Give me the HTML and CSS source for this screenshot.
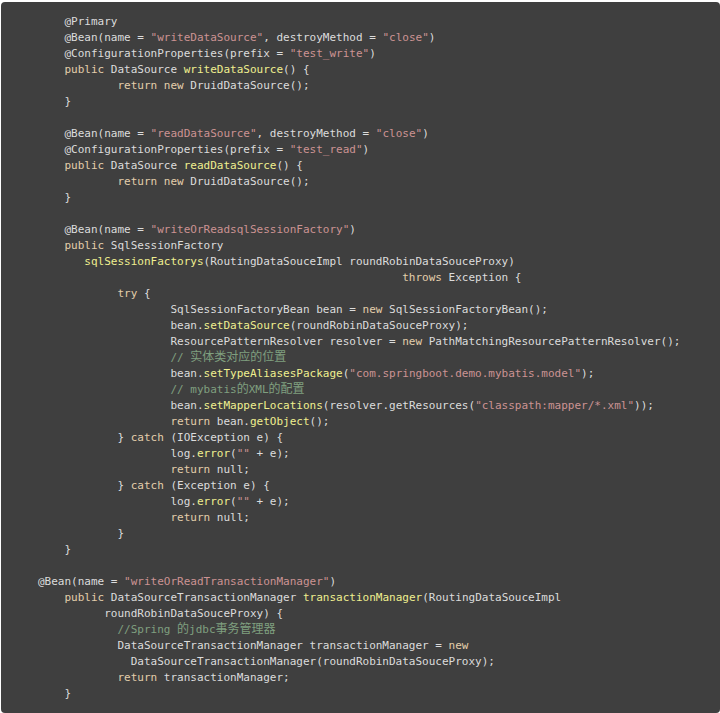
FILE: index.html
```html
<!DOCTYPE html>
<html lang="zh">
<head>
<meta charset="utf-8">
<title>code</title>
<link rel="stylesheet" href="styles.css">
</head>
<body>
<div class="frame">
<pre class="code">    @Primary
    @Bean(name = <span class="s">"writeDataSource"</span>, destroyMethod = <span class="s">"close"</span>)
    @ConfigurationProperties(prefix = <span class="s">"test_write"</span>)
    <span class="k">public</span> DataSource <span class="t">writeDataSource</span>() {
            <span class="k">return</span> <span class="k">new</span> DruidDataSource();
    }

    @Bean(name = <span class="s">"readDataSource"</span>, destroyMethod = <span class="s">"close"</span>)
    @ConfigurationProperties(prefix = <span class="s">"test_read"</span>)
    <span class="k">public</span> DataSource <span class="t">readDataSource</span>() {
            <span class="k">return</span> <span class="k">new</span> DruidDataSource();
    }

    @Bean(name = <span class="s">"writeOrReadsqlSessionFactory"</span>)
    <span class="k">public</span> SqlSessionFactory
       <span class="t">sqlSessionFactorys</span>(RoutingDataSouceImpl roundRobinDataSouceProxy)
                                                       <span class="k">throws</span> Exception {
            <span class="k">try</span> {
                    SqlSessionFactoryBean bean = <span class="k">new</span> SqlSessionFactoryBean();
                    bean.<span class="t">setDataSource</span>(roundRobinDataSouceProxy);
                    ResourcePatternResolver resolver = <span class="k">new</span> PathMatchingResourcePatternResolver();
                    <span class="c">// <span class="cjk">实体类对应的位置</span></span>
                    bean.<span class="t">setTypeAliasesPackage</span>(<span class="s">"com.springboot.demo.mybatis.model"</span>);
                    <span class="c">// mybatis<span class="cjk">的</span>XML<span class="cjk">的配置</span></span>
                    bean.<span class="t">setMapperLocations</span>(resolver.getResources(<span class="s">"classpath:mapper/*.xml"</span>));
                    <span class="k">return</span> bean.<span class="t">getObject</span>();
            } <span class="k">catch</span> (IOException e) {
                    log.<span class="t">error</span>(<span class="s">""</span> + e);
                    <span class="k">return</span> null;
            } <span class="k">catch</span> (Exception e) {
                    log.<span class="t">error</span>(<span class="s">""</span> + e);
                    <span class="k">return</span> null;
            }
    }

@Bean(name = <span class="s">"writeOrReadTransactionManager"</span>)
    <span class="k">public</span> DataSourceTransactionManager <span class="t">transactionManager</span>(RoutingDataSouceImpl
          roundRobinDataSouceProxy) {
            <span class="c">//Spring <span class="cjk">的</span>jdbc<span class="cjk">事务管理器</span></span>
            DataSourceTransactionManager transactionManager = <span class="k">new</span>
              DataSourceTransactionManager(roundRobinDataSouceProxy);
            <span class="k">return</span> transactionManager;
    }</pre>
</div>
</body>
</html>
```

FILE: styles.css
```css
html, body {
  margin: 0;
  padding: 0;
  background: #ffffff;
}

body {
  width: 720px;
  height: 713px;
  overflow: hidden;
}

.frame {
  margin: 2px 0 0 1px;
  height: 711px;
  background: #3f3f3f;
  border-radius: 4px;
  box-sizing: border-box;
  padding: 12px 0 0 37px;
}

.code {
  margin: 0;
  font-family: "DejaVu Sans Mono", "Liberation Mono", "Noto Sans CJK SC", monospace;
  font-size: 11px;
  line-height: 16px;
  color: #dcdcdc;
  white-space: pre;
}

.k { color: #e3ceab; }
.s { color: #cc9393; }
.t { color: #efef8f; }
.c { color: #7f9f7f; }

.cjk {
  font-family: "Noto Sans CJK SC", sans-serif;
  font-size: 12px;
  line-height: 0;
}
```
